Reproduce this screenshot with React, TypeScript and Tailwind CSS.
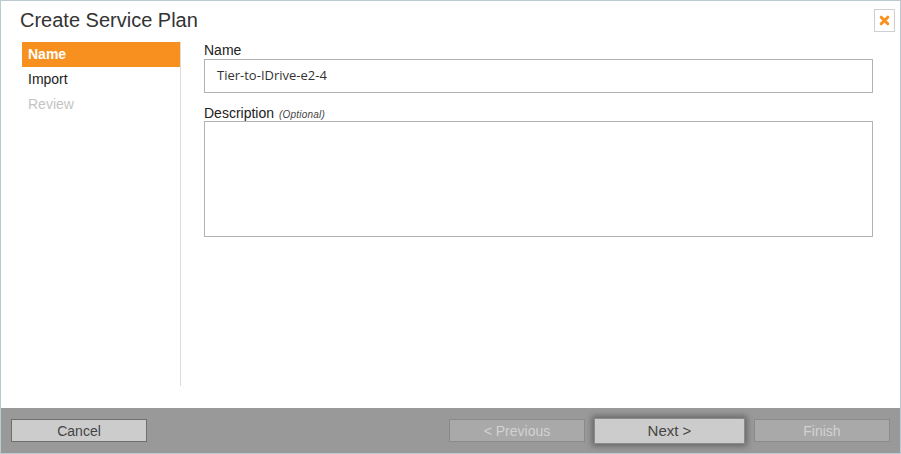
import React from "react";

export default function App() {
  return (
    <div className="w-[901px] h-[454px] bg-white border border-[#b9cad2] flex flex-col font-['Liberation_Sans',Arial,sans-serif] text-[#333]">
      <div className="h-[41px] flex items-start justify-between pl-[19px] pr-[5px]">
        <div className="mt-[6px] text-[20px] leading-[26px] text-[#333]">Create Service Plan</div>
        <div className="mt-[8px] w-[21px] h-[23px] border border-[#cfcfcf] bg-white flex items-center justify-center">
          <svg width="11" height="11" viewBox="0 0 11 11">
            <path d="M2.2 2.2 L8.8 8.8 M8.8 2.2 L2.2 8.8" stroke="#f7901e" strokeWidth="3" strokeLinecap="round" />
          </svg>
        </div>
      </div>
      <div className="flex-1 flex min-h-0">
        <div className="ml-[21px] w-[159px] h-[344px] border-r border-[#dcdcdc] flex flex-col text-[14px]">
          <div className="h-[25px] bg-[#f7901e] text-white font-bold pl-[6px] leading-[25px]">Name</div>
          <div className="h-[25px] pl-[6px] leading-[25px] text-[#222]">Import</div>
          <div className="h-[25px] pl-[6px] leading-[25px] text-[#c4c4c4]">Review</div>
        </div>
        <div className="flex-1 pl-[23px] pr-[27px] flex flex-col">
          <div className="h-[16px] text-[14px] leading-[16px] text-[#222]">Name</div>
          <div className="mt-[1px] h-[34px] border-[1.5px] border-[#b3b3b3] flex items-center pl-[12px] font-['Open_Sans',sans-serif] text-[13px] text-[#333]">
            Tier-to-IDrive-e2-4
          </div>
          <div className="mt-[12px] h-[16px] overflow-visible text-[14px] leading-[16px] text-[#222] whitespace-nowrap">
            <span>Description</span>
            <span className="ml-[5px] italic text-[10px] text-[#444] tracking-[0.2px]">(Optional)</span>
          </div>
          <div className="h-[116px] border-[1.5px] border-[#b3b3b3]" />
        </div>
      </div>
      <div className="h-[45px] bg-[#999999] flex items-center pl-[10px] pr-[10px] text-[14px]">
        <button className="w-[136px] h-[23px] bg-[#cccccc] border border-[#6f6f6f] text-[#444] leading-[20px]">Cancel</button>
        <div className="flex-1" />
        <button className="w-[136px] h-[23px] bg-[#a9a9a9] border border-[#8a8a8a] text-[#d2d2d2] leading-[20px]">&lt; Previous</button>
        <button className="ml-[9px] w-[151px] h-[26px] bg-[#cccccc] border border-[#8a8a8a] text-[#444] text-[15px] leading-[22px] shadow-[0_0_6px_2px_rgba(0,0,0,0.35)]">Next &gt;</button>
        <button className="ml-[9px] w-[136px] h-[23px] bg-[#a9a9a9] border border-[#8a8a8a] text-[#d2d2d2] leading-[20px]">Finish</button>
      </div>
    </div>
  );
}
